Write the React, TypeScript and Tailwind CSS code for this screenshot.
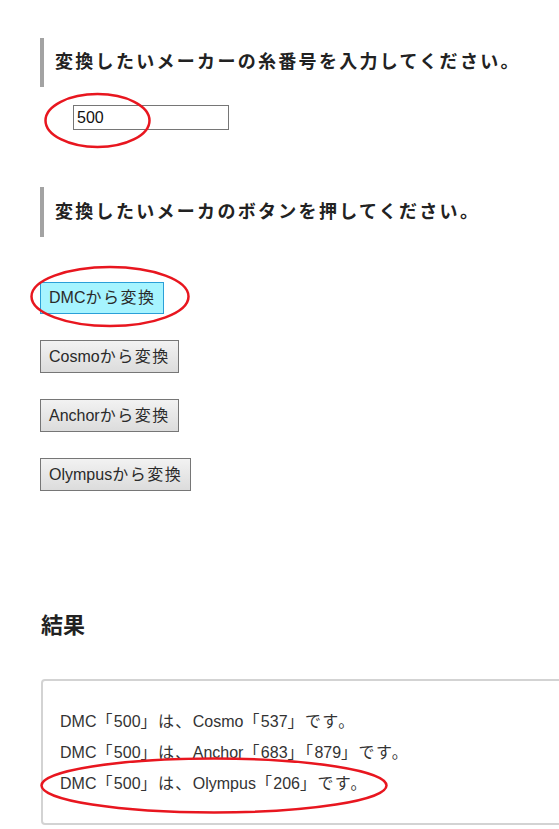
import { Fragment } from 'react';

const font = { fontFamily: '"Liberation Sans", "Noto Sans CJK JP", sans-serif' };

const makers = ['DMC', 'Cosmo', 'Anchor', 'Olympus'];

const results = [
  'DMC「500」は、Cosmo「537」です。',
  'DMC「500」は、Anchor「683」「879」です。',
  'DMC「500」は、Olympus「206」です。',
];

// the original font sets Japanese a little wider than Noto, so space those runs out
const Jp = ({ text }: { text: string }) => {
  const parts = text.split(/([^\x00-\x7f]+)/).filter(Boolean);
  return (
    <>
      {parts.map((p, i) =>
        /[^\x00-\x7f]/.test(p) ? (
          <span key={i} className="tracking-[1.4px]">
            {p}
          </span>
        ) : (
          <Fragment key={i}>{p}</Fragment>
        )
      )}
    </>
  );
};

const App = () => {
  return (
    <div className="relative w-[559px] h-[829px] overflow-hidden bg-white text-[#222]" style={font}>
      <div className="pl-10 pt-[38px]">
        {/* step 1 */}
        <h2 className="h-[49px] flex items-center border-l-4 border-[#a3a3a3] pl-[11px] text-[18px] font-bold tracking-[2.3px] text-[#222]">
          変換したいメーカーの糸番号を入力してください。
        </h2>
        <input
          type="text"
          defaultValue="500"
          className="block mt-[18px] ml-[33px] w-[156px] h-[25px] border border-[#767676] px-[3px] text-[16px] text-[#111] outline-none"
        />

        {/* step 2 */}
        <h2 className="mt-[57px] h-[50px] flex items-center border-l-4 border-[#a3a3a3] pl-[11px] text-[18px] font-bold tracking-[2.3px] text-[#222]">
          変換したいメーカのボタンを押してください。
        </h2>
        <div className="mt-[45px] flex flex-col items-start gap-[26px]">
          {makers.map((m, i) => (
            <button
              key={m}
              className={
                i === 0
                  ? 'h-[32px] px-[8px] border border-[#2a9fd8] bg-[#a6f4ff] text-[16px] text-[#2a2a2a]'
                  : 'h-[33px] px-[8px] border border-[#767676] bg-gradient-to-b from-[#f2f2f2] to-[#dcdcdc] text-[16px] text-[#2a2a2a]'
              }
            >
              {m}
              <span className="tracking-[1.5px]">から変換</span>
            </button>
          ))}
        </div>

        {/* result */}
        <h2 className="mt-[120px] ml-px text-[22px] font-bold leading-[30px] text-[#222]">結果</h2>
        <div className="mt-[38px] ml-px w-[540px] border-2 border-[#d3d3d3] rounded-[4px] pt-[25px] pb-[24px] pl-[17px]">
          {results.map((r) => (
            <p key={r} className="text-[16px] leading-[31px] text-[#333]">
              <Jp text={r} />
            </p>
          ))}
        </div>
      </div>

      {/* hand-drawn annotations */}
      <svg className="absolute inset-0 pointer-events-none" width="559" height="829" viewBox="0 0 559 829">
        <g fill="none" stroke="#e8161f" strokeWidth="2.5">
          <ellipse cx="97.5" cy="120.5" rx="52" ry="26.5" />
          <ellipse cx="110" cy="296.5" rx="78.5" ry="29.5" />
          <ellipse cx="214" cy="785.5" rx="172.5" ry="27" />
        </g>
      </svg>
    </div>
  );
};

export default App;
